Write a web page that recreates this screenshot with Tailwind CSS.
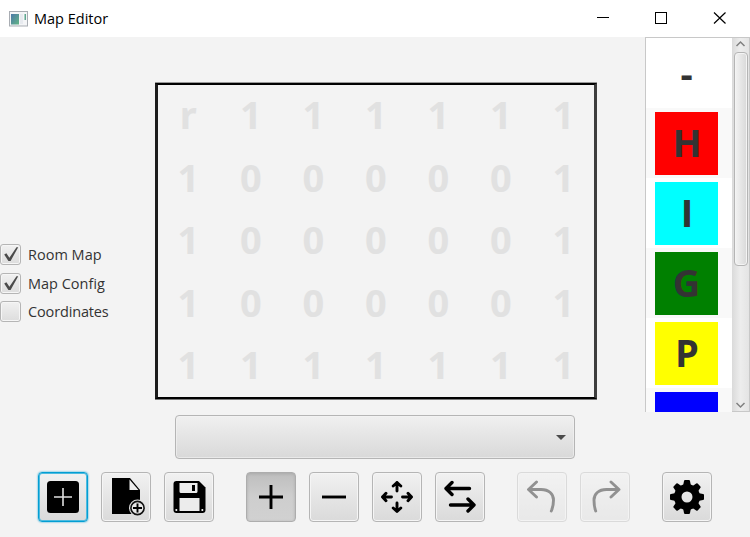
<!DOCTYPE html>
<html lang="en"><head><meta charset="utf-8"><title>Map Editor</title>
<script src="https://cdn.jsdelivr.net/npm/@tailwindcss/browser@4"></script></head>
<body class="w-[750px] h-[537px] overflow-hidden bg-[#f3f3f3] font-['Open_Sans',sans-serif] text-[#333] flex flex-col">
<header class="h-[37px] shrink-0 bg-white flex items-center pl-[9px] text-black">
<svg class="w-[19px] h-[16px]" viewBox="0 0 19 16"><defs><linearGradient id="ic" x2="1" y2="1"><stop stop-color="#4b78a8"/><stop offset="1" stop-color="#62b585"/></linearGradient></defs><rect x=".5" y=".5" width="18" height="14.500" fill="#f4f5f7" stroke="#a9adb3"/><rect x="2" y="3" width="8" height="10.500" fill="url(#ic)"/><path d="M11 3h3v10h-3z" fill="#e7eaef"/><rect x="15.500" y="3" width="1.500" height="6" fill="#5fa890"/></svg>
<span id="title" class="ml-[6px] text-[14.500px] leading-[20px] whitespace-nowrap">Map Editor</span>
<svg class="ml-auto w-[153px] h-[37px]" viewBox="597 0 153 37" fill="none" stroke="#000" shape-rendering="crispEdges"><path d="M597 17.500h12M655.500 12.500h11v11h-11z"/><path d="M714 12.500l11.500 11M725.500 12.500l-11.500 11" shape-rendering="auto" stroke-width="1.200"/></svg>
</header>
<main class="flex h-[375px] shrink-0">
<section class="w-[155px] pt-[207px] text-[14.500px] leading-[21px]">
<label class="flex h-[21px] mb-[8px] gap-[7px]"><span class="w-[21px] h-[21px] rounded-[3px] border border-[#b5b5b5] bg-linear-to-b from-[#f1f1f1] to-[#dddddd] shadow-[inset_0_0_0_1px_#f6f6f6]"><svg class="size-[19px]" viewBox="0 0 19 19"><path d="M3.200 9.500l2.200-1.200 3 4.500L15.500 2.200h1.700L9.600 16H7.400z" fill="#4b4b4b"/></svg></span><span>Room Map</span></label>
<label class="flex h-[21px] mb-[7px] gap-[7px]"><span class="w-[21px] h-[21px] rounded-[3px] border border-[#b5b5b5] bg-linear-to-b from-[#f1f1f1] to-[#dddddd] shadow-[inset_0_0_0_1px_#f6f6f6]"><svg class="size-[19px]" viewBox="0 0 19 19"><path d="M3.200 9.500l2.200-1.200 3 4.500L15.500 2.200h1.700L9.600 16H7.400z" fill="#4b4b4b"/></svg></span><span>Map Config</span></label>
<label class="flex h-[21px] gap-[7px]"><span class="w-[21px] h-[21px] rounded-[3px] border border-[#b5b5b5] bg-linear-to-b from-[#f1f1f1] to-[#dddddd] shadow-[inset_0_0_0_1px_#f6f6f6]"></span><span class="tracking-[-0.150px]">Coordinates</span></label>
</section>
<section class="mt-[46px] w-[442px] h-[316px] border-x-[3px] border-t-2 border-b-2 border-l-[#1b1b1b] border-r-[#3d3d3d] border-y-black shadow-[0_-1px_0_#999,0_1px_0_#777]">
<div id="grid" class="w-[437.500px] h-[312.500px] -mt-[2px] -ml-px grid grid-cols-7 grid-rows-5 text-center font-['Noto_Sans',sans-serif] font-bold text-[38px] leading-[62.500px] text-[#e1e1e1]">
<span>r</span><span>1</span><span>1</span><span>1</span><span>1</span><span>1</span><span>1</span>
<span>1</span><span>0</span><span>0</span><span>0</span><span>0</span><span>0</span><span>1</span>
<span>1</span><span>0</span><span>0</span><span>0</span><span>0</span><span>0</span><span>1</span>
<span>1</span><span>0</span><span>0</span><span>0</span><span>0</span><span>0</span><span>1</span>
<span>1</span><span>1</span><span>1</span><span>1</span><span>1</span><span>1</span><span>1</span>
</div></section>
<aside class="ml-[48px] w-[105px] h-[375px] border border-b-0 border-[#c8c8c8] flex overflow-hidden">
<div class="w-[86px] bg-white overflow-hidden font-bold text-[38px] leading-[61px] text-center">
<div class="h-[70px] pl-[9px]"><div class="w-[63px] pt-[5px]">-</div></div>
<div class="h-[70px] pl-[9px] pt-[4px] bg-[#f9f9f9]"><div class="size-[63px] bg-[#f00] pl-px">H</div></div>
<div class="h-[70px] pl-[9px] pt-[4px]"><div class="size-[63px] bg-[#0ff] pl-px">I</div></div>
<div class="h-[70px] pl-[9px] pt-[4px] bg-[#f9f9f9]"><div class="size-[63px] bg-[#008000]">G</div></div>
<div class="h-[70px] pl-[9px] pt-[4px]"><div class="size-[63px] bg-[#ff0] pl-px">P</div></div>
<div class="h-[70px] pl-[9px] pt-[4px] bg-[#f9f9f9]"><div class="size-[63px] bg-[#00f]"></div></div>
</div>
<div class="w-[17px] bg-linear-to-r from-[#dadada] via-[#ededed] to-[#e4e4e4] border-b border-[#c8c8c8] flex flex-col items-center">
<svg class="w-[17px] h-[14px] shrink-0" viewBox="0 0 17 14"><path d="M4.500 8l4-4 4 4" fill="none" stroke="#808080" stroke-width="1.500"/></svg>
<div class="w-[14px] h-[214px] rounded-[4px] border border-[#b5b5b5] bg-linear-to-r from-[#f3f3f3] to-[#d9d9d9] shadow-[inset_0_0_0_1px_#f4f4f4]"></div>
<svg class="mt-auto w-[17px] h-[14px]" viewBox="0 0 17 14"><path d="M4.500 6l4 4 4-4" fill="none" stroke="#808080" stroke-width="1.500"/></svg>
</div></aside>
</main>
<div class="mt-[3px] ml-[175px] w-[400px] h-[44px] shrink-0 rounded-[4px] border border-[#b5b5b5] bg-linear-to-b from-[#f0f0f0] to-[#d9d9d9] shadow-[inset_0_0_0_1px_#f3f3f399] flex items-center justify-end pr-[8px]"><svg class="w-[10px] h-[5px]" viewBox="0 0 10 5"><path d="M0 0h10L5 5z" fill="#4b4b4b"/></svg></div>
<nav class="mt-[13px] ml-[38px] flex gap-[13px] [&>button]:size-[50px] [&>button]:shrink-0 [&>button]:rounded-[4px] [&>button]:border [&>button]:border-[#b5b5b5] [&>button]:bg-linear-to-b [&>button]:from-[#f1f1f1] [&>button]:to-[#dadada] [&>button]:shadow-[inset_0_0_0_1px_#f5f5f5] [&_svg]:size-[48px]">
<button class="border-[#039ed3]! shadow-[inset_0_0_0_1px_#4ebbdf,0_0_2px_#039ed3]!"><svg viewBox="1 1 48 48"><rect x="9" y="9" width="32" height="32" rx="3.500"/><path d="M16 25h18M25 16v18" stroke="#e0e0e0" stroke-width="1.600"/></svg></button>
<button><svg viewBox="1 1 48 48"><path d="M11 6h18l10 12v24H11z"/><path d="M28.500 7.500l9 10.500h-9z" fill="#eee"/><circle cx="36.500" cy="36" r="8.500" fill="#e0e0e0"/><circle cx="36.500" cy="36" r="6.600" fill="#e6e6e6" stroke="#111" stroke-width="1.600"/><path d="M32 36h9M36.500 31.500v9" stroke="#000" stroke-width="1.900"/></svg></button>
<button><svg viewBox="1 1 48 48"><path d="M12.500 9H35l6.500 6.500V38a3 3 0 0 1-3 3h-26a3 3 0 0 1-3-3V12a3 3 0 0 1 3-3z"/><path d="M15.500 11h18v8.500a1.500 1.500 0 0 1-1.500 1.500H17a1.500 1.500 0 0 1-1.500-1.500zM15.500 26h20v13h-20z" fill="#ececec"/><path d="M28 13h3v6h-3z"/><path d="M11.500 37h1.700v2h-1.700zM37.500 37h1.700v2h-1.700z" fill="#e8e8e8"/></svg></button>
<button class="ml-[19px] from-[#bebebe]! via-[#cecece] to-[#d1d1d1]! border-[#adadad]! shadow-[inset_0_1px_3px_#aaa]!"><svg viewBox="1 1 48 48"><path d="M13 25h24M25 13v24" stroke="#000" stroke-width="2.900"/></svg></button>
<button><svg viewBox="1 1 48 48"><path d="M13 25h24" stroke="#000" stroke-width="2.900"/></svg></button>
<button><svg viewBox="1 1 48 48" fill="none" stroke="#000" stroke-width="2.900" stroke-linecap="round" stroke-linejoin="round"><path d="M25 19V10.500M21.200 14l3.800-3.500 3.800 3.500M25 31v8.500M21.200 36l3.800 3.500 3.800-3.500M19.500 25h-9M14 21.200l-3.500 3.800 3.500 3.800M30.500 25h9M36 21.200l3.500 3.800-3.500 3.800"/></svg></button>
<button><svg viewBox="1 1 48 48" fill="none" stroke="#000" stroke-width="3.400" stroke-linecap="round" stroke-linejoin="round"><path d="M34.500 16.500H11M17 10.500l-6 6 6 6M15.500 33H39M33 27l6 6-6 6"/></svg></button>
<button class="ml-[19px] opacity-40"><svg viewBox="1 1 48 48" fill="none" stroke="#000" stroke-width="2.900" stroke-linecap="round" stroke-linejoin="round"><path d="M19.500 10L11.500 17.500l8 7.500M12 17.500h12c8 0 12.500 4.500 12.500 10.500 0 4-.8 8-2.200 11"/></svg></button>
<button class="opacity-40"><svg viewBox="1 1 48 48" fill="none" stroke="#000" stroke-width="2.900" stroke-linecap="round" stroke-linejoin="round"><path d="M31 10l8 7.500-8 7.500M38.500 17.500h-12c-8 0-12.500 4.500-12.500 10.500 0 4 .5 8 1.700 11"/></svg></button>
<button class="ml-[19px]"><svg viewBox="1 1 48 48"><g transform="translate(25 25)"><path d="M0-13A13 13 0 1 1 0 13A13 13 0 1 1 0-13M0-5.500A5.500 5.500 0 1 0 0 5.500A5.500 5.500 0 1 0 0-5.500" fill-rule="evenodd"/><g id="t"><path id="tooth" d="M-4-11l1-5q.2-1 1-1h4q.8 0 1 1l1 5z"/><use href="#tooth" transform="rotate(45)"/><use href="#tooth" transform="rotate(90)"/><use href="#tooth" transform="rotate(135)"/></g><use href="#t" transform="rotate(180)"/></g></svg></button>
</nav>
</body></html>
